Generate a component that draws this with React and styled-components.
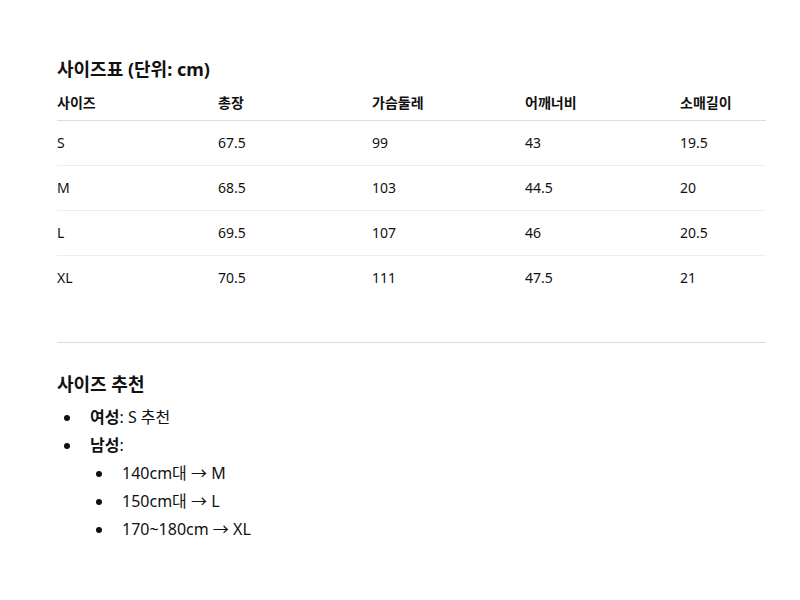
import styled, { createGlobalStyle } from "styled-components";

const GlobalStyle = createGlobalStyle`
  body {
    margin: 0;
    background: #fff;
    color: #111;
    font-family: "Noto Sans", "Noto Sans CJK KR", sans-serif;
  }
`;

const columns = ["사이즈", "총장", "가슴둘레", "어깨너비", "소매길이"];

const rows = [
  ["S", "67.5", "99", "43", "19.5"],
  ["M", "68.5", "103", "44.5", "20"],
  ["L", "69.5", "107", "46", "20.5"],
  ["XL", "70.5", "111", "47.5", "21"],
];

const App = () => {
  return (
    <>
      <GlobalStyle />
      <Page>
        <Title>사이즈표 (단위: cm)</Title>
        <Table>
          <HeadRow>
            {columns.map((c) => (
              <HeadCell key={c}>{c}</HeadCell>
            ))}
          </HeadRow>
          {rows.map((r, i) => (
            <Row key={r[0]} $last={i === rows.length - 1}>
              {r.map((v, j) => (
                <Cell key={j}>{v}</Cell>
              ))}
            </Row>
          ))}
        </Table>

        <Divider />

        <Title>사이즈 추천</Title>
        <List>
          <Item>
            <strong>여성</strong>: S 추천
          </Item>
          <Item>
            <strong>남성</strong>:
            <SubList>
              <Item>140cm대 → M</Item>
              <Item>150cm대 → L</Item>
              <Item>170~180cm → XL</Item>
            </SubList>
          </Item>
        </List>
      </Page>
    </>
  );
};

const Page = styled.div`
  padding: 56px 34px 40px 57px;
`;

const Title = styled.h2`
  margin: 0;
  font-size: 18px;
  line-height: 26px;
  font-weight: 700;
`;

const Table = styled.div`
  margin-top: 11px;
  font-size: 14px;
`;

const grid = `
  display: grid;
  grid-template-columns: 161px 154px 153px 155px 1fr;
`;

const HeadRow = styled.div`
  ${grid}
  border-bottom: 1px solid #dcdcdc;
`;

const HeadCell = styled.div`
  line-height: 20px;
  padding: 0 0 7px;
  font-weight: 700;
`;

const Row = styled.div`
  ${grid}
  border-bottom: 1px solid ${(p) => (p.$last ? "transparent" : "#eeeeee")};
`;

const Cell = styled.div`
  line-height: 21px;
  padding: 11px 0 12px;
`;

const Divider = styled.hr`
  margin: 41px 0 28px;
  border: none;
  border-top: 1px solid #dcdcdc;
`;

const List = styled.ul`
  margin: 6px 0 0;
  padding-left: 25px;
  font-size: 16px;
  line-height: 28px;

  strong {
    font-weight: 700;
  }
`;

const SubList = styled.ul`
  margin: 0;
  padding-left: 24px;
  list-style: disc;
`;

const Item = styled.li`
  padding-left: 8px;
`;

export default App;
